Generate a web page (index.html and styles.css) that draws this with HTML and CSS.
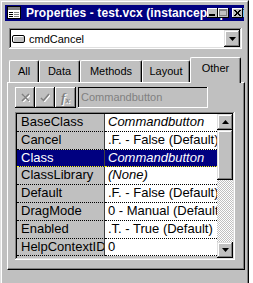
FILE: index.html
```html
<!DOCTYPE html>
<html>
<head>
<meta charset="utf-8">
<link rel="stylesheet" href="styles.css">
</head>
<body>
<div class="window">
  <div class="frame">
    <div class="titlebar">
      <svg class="appicon" width="15" height="14" viewBox="0 0 15 14">
        <rect x="0.5" y="0.5" width="13" height="12" fill="#fff" stroke="#000"/>
        <rect x="1" y="1" width="12" height="3" fill="#808080"/>
        <rect x="2" y="6" width="4" height="1" fill="#000"/>
        <rect x="7" y="6" width="5" height="1" fill="#808080"/>
        <rect x="2" y="8" width="4" height="1" fill="#000"/>
        <rect x="7" y="8" width="5" height="1" fill="#808080"/>
        <rect x="2" y="10" width="4" height="1" fill="#000"/>
        <rect x="7" y="10" width="5" height="1" fill="#808080"/>
      </svg>
      <span class="title">Properties - test.vcx (instanceproperties)</span>
      <div class="capbtns">
        <span class="capbtn"><svg width="11" height="10" viewBox="0 0 11 10"><rect x="2" y="6" width="6" height="2" fill="#000"/></svg></span>
        <span class="capbtn"><svg width="11" height="10" viewBox="0 0 11 10"><rect x="1.5" y="1.5" width="7" height="6" fill="none" stroke="#808080"/><rect x="1" y="1" width="8" height="2" fill="#808080"/></svg></span>
        <span class="capbtn close"><svg width="11" height="10" viewBox="0 0 11 10"><path d="M2 2 L8 8 M3 2 L9 8 M8 2 L2 8 M9 2 L3 8" stroke="#000" stroke-width="1"/></svg></span>
      </div>
    </div>

    <div class="combo">
      <span class="objicon"></span>
      <span class="combotext">cmdCancel</span>
      <span class="dropbtn"><svg width="7" height="4" viewBox="0 0 7 4"><path d="M0 0H7L3.5 4Z" fill="#000"/></svg></span>
    </div>

    <div class="tabs">
      <div class="tab">All</div>
      <div class="tab">Data</div>
      <div class="tab">Methods</div>
      <div class="tab">Layout</div>
      <div class="tab sel">Other</div>
    </div>

    <div class="page">
      <div class="toolbar">
        <span class="tool"><svg width="9" height="9" viewBox="0 0 9 9"><path d="M1 1L8 8M8 1L1 8" stroke="#fff" stroke-width="1.6" transform="translate(1 1)"/><path d="M1 1L8 8M8 1L1 8" stroke="#808080" stroke-width="1.6"/></svg></span>
        <span class="tool"><svg width="10" height="9" viewBox="0 0 10 9"><path d="M1 5L3.5 7.5L9 1" fill="none" stroke="#fff" stroke-width="1.6" transform="translate(1 1)"/><path d="M1 5L3.5 7.5L9 1" fill="none" stroke="#808080" stroke-width="1.6"/></svg></span>
        <span class="tool fx"><span class="fxt">f<sub>x</sub></span></span>
        <div class="editbox">Commandbutton</div>
      </div>

      <div class="grid">
        <div class="rows">
          <div class="row"><div class="name">BaseClass</div><div class="value it">Commandbutton</div></div>
          <div class="row"><div class="name">Cancel</div><div class="value">.F. - False (Default)</div></div>
          <div class="row sel"><div class="name">Class</div><div class="value it">Commandbutton</div></div>
          <div class="row"><div class="name">ClassLibrary</div><div class="value it">(None)</div></div>
          <div class="row"><div class="name">Default</div><div class="value">.F. - False (Default)</div></div>
          <div class="row"><div class="name">DragMode</div><div class="value">0 - Manual (Default)</div></div>
          <div class="row"><div class="name">Enabled</div><div class="value">.T. - True (Default)</div></div>
          <div class="row"><div class="name">HelpContextID</div><div class="value">0</div></div>
        </div>
        <div class="vscroll">
          <span class="sbtn"><svg width="7" height="4" viewBox="0 0 7 4"><path d="M3.5 0L7 4H0Z" fill="#000"/></svg></span>
          <span class="thumb"></span>
          <span class="track"></span>
          <span class="sbtn"><svg width="7" height="4" viewBox="0 0 7 4"><path d="M0 0H7L3.5 4Z" fill="#000"/></svg></span>
        </div>
      </div>
    </div>
  </div>
</div>
</body>
</html>
```
FILE: styles.css
```css
html, body {
  margin: 0;
  padding: 0;
  background: #fff;
  width: 253px;
  height: 283px;
  overflow: hidden;
  font-family: "Liberation Sans", Arial, sans-serif;
}

.window {
  width: 249px;
  height: 292px;
  box-sizing: border-box;
  border: 1px solid;
  border-color: #dfdfdf #000 #000 #dfdfdf;
  background: #c0c0c0;
}

.frame {
  height: 100%;
  box-sizing: border-box;
  border: 1px solid;
  border-color: #fff #808080 #808080 #fff;
  padding: 3px 3px 0 3px;
  display: flex;
  flex-direction: column;
}

.titlebar {
  height: 16px;
  background: #000080;
  display: flex;
  align-items: center;
  overflow: hidden;
  position: relative;
}

.appicon {
  flex: none;
  margin-left: 2px;
  margin-right: 4px;
}

.title {
  color: #fff;
  font-weight: bold;
  font-size: 12px;
  white-space: nowrap;
  overflow: hidden;
  flex: 1;
  letter-spacing: 0.1px;
}

.capbtns {
  position: absolute;
  right: 1px;
  top: 3px;
  display: flex;
  background: #000080;
}

.capbtn {
  width: 11px;
  height: 10px;
  background: #c0c0c0;
  box-shadow: inset -1px -1px #000, inset 1px 1px #fff;
  display: flex;
}

.capbtn.close {
  margin-left: 3px;
}

.combo {
  margin: 7px 2px 0 4px;
  height: 21px;
  box-sizing: border-box;
  background: #fff;
  box-shadow: inset -1px -1px #fff, inset 1px 1px #808080, inset -2px -2px #dfdfdf, inset 2px 2px #000;
  display: flex;
  align-items: center;
  padding: 2px 2px 2px 3px;
}

.objicon {
  width: 11px;
  height: 6px;
  border: 1px solid #000;
  border-radius: 2px;
  background: #c0c0c0;
  box-shadow: inset 1px 1px #fff;
  margin-right: 4px;
  margin-top: 1px;
}

.combotext {
  font-size: 11px;
  flex: 1;
}

.dropbtn {
  width: 16px;
  height: 17px;
  background: #c0c0c0;
  box-shadow: inset -1px -1px #000, inset 1px 1px #dfdfdf, inset -2px -2px #808080, inset 2px 2px #fff;
  display: flex;
  align-items: center;
  justify-content: center;
}

.tabs {
  margin: 8px 0 0 4px;
  height: 25px;
  display: flex;
  align-items: flex-end;
  position: relative;
  z-index: 2;
}

.tab {
  height: 22px;
  box-sizing: border-box;
  border-top: 1px solid #fff;
  border-left: 1px solid #fff;
  border-right: 1px solid #000;
  border-radius: 2px 2px 0 0;
  box-shadow: inset -1px 0 #808080;
  font-size: 11px;
  display: flex;
  justify-content: center;
  padding-top: 4px;
  background: #c0c0c0;
}

.tab:nth-child(1) { width: 30px; }
.tab:nth-child(2) { width: 41px; }
.tab:nth-child(3) { width: 62px; }
.tab:nth-child(4) { width: 48px; }
.tab.sel {
  width: 51px;
  height: 26px;
  margin-bottom: -1px;
  padding-top: 4px;
}

.page {
  margin-left: 2px;
  width: 238px;
  height: 188px;
  box-sizing: border-box;
  border: 1px solid;
  border-color: #fff #000 #000 #fff;
  box-shadow: inset -1px -1px #808080;
  padding: 4px 0 0 7px;
}

.toolbar {
  display: flex;
  height: 21px;
}

.tool {
  width: 20px;
  height: 21px;
  box-sizing: border-box;
  background: #c0c0c0;
  box-shadow: inset -1px -1px #000, inset 1px 1px #fff, inset -2px -2px #808080;
  display: flex;
  align-items: center;
  justify-content: center;
}

.tool.fx {
  width: 21px;
}

.fxt {
  font-family: "Liberation Serif", serif;
  font-style: italic;
  font-weight: bold;
  font-size: 13px;
  color: #808080;
  text-shadow: 1px 1px #fff;
  line-height: 1;
}

.fxt sub {
  font-size: 9px;
  vertical-align: -1px;
}

.editbox {
  margin-left: 2px;
  width: 130px;
  height: 21px;
  box-sizing: border-box;
  box-shadow: inset -1px -1px #fff, inset 1px 1px #000;
  font-size: 11px;
  color: #808080;
  padding: 4px 0 0 3px;
}

.grid {
  margin-top: 4px;
  width: 220px;
  height: 148px;
  box-sizing: border-box;
  padding: 2px;
  box-shadow: inset -1px -1px #fff, inset 1px 1px #808080, inset -2px -2px #dfdfdf, inset 2px 2px #000;
  display: flex;
  overflow: hidden;
}

.rows {
  width: 200px;
  flex: none;
  overflow: hidden;
}

.row {
  display: flex;
  height: 17.8px;
  box-sizing: border-box;
  font-size: 13px;
  line-height: 16px;
}

.name {
  width: 88px;
  flex: none;
  box-sizing: border-box;
  padding-left: 4px;
  background: #c0c0c0;
  border-bottom: 1px dotted #000;
  border-right: 1px solid #404040;
  white-space: nowrap;
  overflow: hidden;
}

.value {
  flex: 1;
  background: #fff;
  padding-left: 3px;
  border-bottom: 1px dotted #000;
  white-space: nowrap;
  overflow: hidden;
}

.it {
  font-style: italic;
}

.row.sel .name,
.row.sel .value {
  background: #000080;
  color: #fff;
  border-bottom-color: #ffff00;
}

.vscroll {
  width: 16px;
  display: flex;
  flex-direction: column;
  flex: none;
}

.sbtn {
  height: 16px;
  flex: none;
  background: #c0c0c0;
  box-shadow: inset -1px -1px #000, inset 1px 1px #dfdfdf, inset -2px -2px #808080, inset 2px 2px #fff;
  display: flex;
  align-items: center;
  justify-content: center;
}

.thumb {
  height: 50px;
  flex: none;
  background: #c0c0c0;
  box-shadow: inset -1px -1px #000, inset 1px 1px #dfdfdf, inset -2px -2px #808080, inset 2px 2px #fff;
}

.track {
  flex: 1;
  background-color: #fff;
  background-image: repeating-conic-gradient(#c0c0c0 0 25%, #fff 0 50%);
  background-size: 2px 2px;
}
```
